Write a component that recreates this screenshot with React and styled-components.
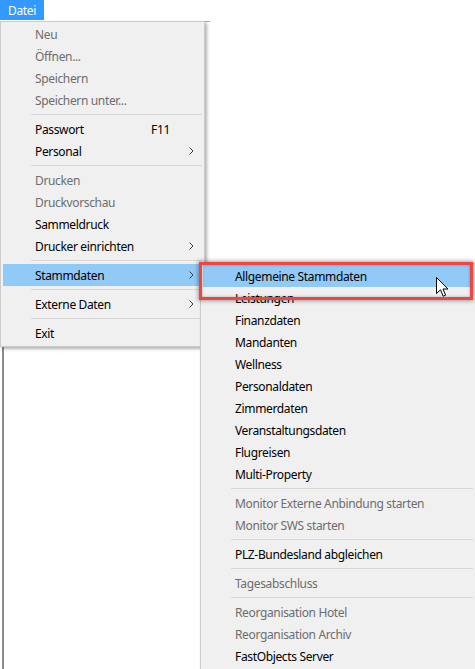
import React from 'react';
import styled, { createGlobalStyle } from 'styled-components';

const GlobalStyle = createGlobalStyle`
  html, body {
    margin: 0;
    padding: 0;
    background: #ffffff;
  }
  body {
    font-family: "Noto Sans", "Open Sans", Arial, sans-serif;
    font-size: 12px;
    letter-spacing: -0.35px;
    color: #000;
  }
`;

const Page = styled.div`
  position: relative;
  width: 475px;
  height: 669px;
  overflow: hidden;
  background: #ffffff;
`;

const MenuBar = styled.div`
  display: flex;
  height: 21px;
  background: #ffffff;
`;

const MenuTitle = styled.div`
  display: flex;
  align-items: center;
  height: 20px;
  padding: 0 8px 0 8px;
  background: #3399ff;
  color: #ffffff;
`;

/* window lying behind the open menu */
const Backdrop = styled.div`
  margin-left: 2px;
  width: 208px;
  height: 648px;
  border-left: 2px solid #8c8c8c;
  border-top: 1px solid #a8a8a8;
  box-sizing: border-box;
`;

const Menu = styled.div`
  position: absolute;
  left: ${p => p.$left}px;
  top: ${p => p.$top}px;
  width: ${p => p.$width}px;
  box-sizing: border-box;
  padding: 1px 2px 2px;
  background: #f0f0f0;
  border: 1px solid #cccccc;
  box-shadow: 2px 2px 3px rgba(0, 0, 0, 0.3);
  display: flex;
  flex-direction: column;
`;

const Item = styled.div`
  display: grid;
  grid-template-columns: 1fr auto 32px;
  align-items: center;
  height: 22px;
  padding-left: 32px;
  color: ${p => (p.$disabled ? '#6d6d6d' : '#000000')};
  background: ${p => (p.$active ? '#91c9f7' : 'transparent')};
  white-space: nowrap;
`;

const Shortcut = styled.span`
  text-align: right;
`;

const ArrowSlot = styled.span`
  display: flex;
  align-items: center;
  padding-left: 19px;
`;

const Separator = styled.div`
  height: 7px;
  display: flex;
  align-items: center;
  padding-left: 28px;

  &::after {
    content: '';
    flex: 1;
    height: 1px;
    background: #d7d7d7;
  }
`;

const Highlight = styled.div`
  position: absolute;
  left: 199px;
  top: 262px;
  width: 274px;
  height: 38px;
  box-sizing: border-box;
  border: 3px solid #ec4646;
  box-shadow: 0 0 4px 1px rgba(0, 0, 0, 0.35), inset 0 0 3px rgba(0, 0, 0, 0.3);
`;

const Cursor = styled.svg`
  position: absolute;
  left: 436px;
  top: 277px;
`;

const Chevron = () => (
  <svg width="5" height="8" viewBox="0 0 5 8">
    <path d="M0.5 0.5 L4 4 L0.5 7.5" fill="none" stroke="#3c3c3c" strokeWidth="1" />
  </svg>
);

const mainMenu = [
  { label: 'Neu', disabled: true },
  { label: 'Öffnen...', disabled: true },
  { label: 'Speichern', disabled: true },
  { label: 'Speichern unter...', disabled: true },
  'sep',
  { label: 'Passwort', shortcut: 'F11' },
  { label: 'Personal', sub: true },
  'sep',
  { label: 'Drucken', disabled: true },
  { label: 'Druckvorschau', disabled: true },
  { label: 'Sammeldruck' },
  { label: 'Drucker einrichten', sub: true },
  'sep',
  { label: 'Stammdaten', sub: true, active: true },
  'sep',
  { label: 'Externe Daten', sub: true },
  'sep',
  { label: 'Exit' },
];

const subMenu = [
  { label: 'Allgemeine Stammdaten', active: true },
  { label: 'Leistungen' },
  { label: 'Finanzdaten' },
  { label: 'Mandanten' },
  { label: 'Wellness' },
  { label: 'Personaldaten' },
  { label: 'Zimmerdaten' },
  { label: 'Veranstaltungsdaten' },
  { label: 'Flugreisen' },
  { label: 'Multi-Property' },
  'sep',
  { label: 'Monitor Externe Anbindung starten', disabled: true },
  { label: 'Monitor SWS starten', disabled: true },
  'sep',
  { label: 'PLZ-Bundesland abgleichen' },
  'sep',
  { label: 'Tagesabschluss', disabled: true },
  'sep',
  { label: 'Reorganisation Hotel', disabled: true },
  { label: 'Reorganisation Archiv', disabled: true },
  { label: 'FastObjects Server' },
];

function MenuList({ items }) {
  return items.map((item, i) =>
    item === 'sep' ? (
      <Separator key={i} />
    ) : (
      <Item key={i} $disabled={item.disabled} $active={item.active}>
        <span>{item.label}</span>
        <Shortcut>{item.shortcut}</Shortcut>
        <ArrowSlot>{item.sub && <Chevron />}</ArrowSlot>
      </Item>
    )
  );
}

export default function App() {
  return (
    <Page>
      <GlobalStyle />
      <MenuBar>
        <MenuTitle>Datei</MenuTitle>
      </MenuBar>
      <Backdrop />

      <Menu $left={0} $top={21} $width={205}>
        <MenuList items={mainMenu} />
      </Menu>

      <Menu $left={200} $top={263} $width={276}>
        <MenuList items={subMenu} />
      </Menu>

      <Highlight />

      <Cursor width="13" height="21" viewBox="0 0 13 21">
        <path
          d="M0.5 0.5 L0.5 16.5 L4.5 12.8 L7.2 19.2 L9.6 18.2 L7 12 L12 12 Z"
          fill="#ffffff"
          stroke="#000000"
          strokeWidth="1"
          strokeLinejoin="miter"
        />
      </Cursor>
    </Page>
  );
}
